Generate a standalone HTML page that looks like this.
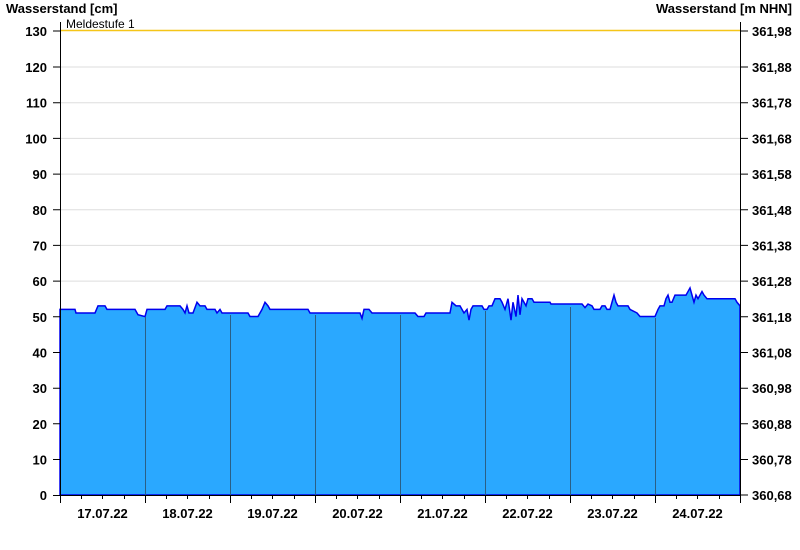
<!DOCTYPE html><html><head><style>body{margin:0;background:#fff}svg{display:block;font-family:"Liberation Sans",Arial,sans-serif}</style></head><body>
<svg width="800" height="550" viewBox="0 0 800 550">
<text x="6" y="13" font-size="13" font-weight="bold">Wasserstand [cm]</text>
<text x="792" y="13" font-size="13" font-weight="bold" text-anchor="end">Wasserstand [m NHN]</text>
<g stroke="#dddddd" stroke-width="1">
<line x1="60" x2="740" y1="459.5" y2="459.5"/><line x1="60" x2="740" y1="423.8" y2="423.8"/><line x1="60" x2="740" y1="388.2" y2="388.2"/><line x1="60" x2="740" y1="352.5" y2="352.5"/><line x1="60" x2="740" y1="316.8" y2="316.8"/><line x1="60" x2="740" y1="281.1" y2="281.1"/><line x1="60" x2="740" y1="245.4" y2="245.4"/><line x1="60" x2="740" y1="209.8" y2="209.8"/><line x1="60" x2="740" y1="174.1" y2="174.1"/><line x1="60" x2="740" y1="138.4" y2="138.4"/><line x1="60" x2="740" y1="102.7" y2="102.7"/><line x1="60" x2="740" y1="67" y2="67"/>
</g>
<line x1="60" x2="740" y1="30.5" y2="30.5" stroke="#f5c518" stroke-width="1.5"/>
<text x="66" y="28" font-size="12">Meldestufe 1</text>
<g transform="translate(0,495) scale(1,-3.5692)">
<polygon fill="#2aa8ff" stroke="#0000ee" stroke-width="1.5" vector-effect="non-scaling-stroke" points="60,0 60,52 75,52 76,51 95,51 98,53 105,53 107,52 135,52 138,50.5 145,50 147,52 165,52 167,53 180,53 183,52 185,51 187,53 189,51 193,51 197,54 200,53 205,53 207,52 215,52 217,51 220,52 222,51 248,51 250,50 258,50 262,52 265,54 268,53 270,52 308,52 310,51 360,51 362,49.5 364,52 369,52 372,51 415,51 418,50 424,50 426,51 450,51 452,54 456,53 460,53 464,51 467,52 469,49 471,52 473,53 482,53 484,52 487,52 489,53 492,53 495,55 500,55 502,54 505,52 508,55 511,49 513,54 516,50 518,56 520,50.5 522,55 524,54 526,53 528,55 532,55 534,54 550,54 551,53.5 582,53.5 585,52.5 588,53.5 592,53 594,52 600,52 602,53 605,53 607,52 610,52 612,54 614,56 616,54 618,53 628,53 630,52 637,51 640,50 655,50 658,52 660,53 664,53 666,55 668,56 670,54 672,54 675,56 686,56 688,57 690,58 692,56 694,54 696,56 698,55 700,56 702,57 704,56 707,55 735,55 737,54 740,53 740,0"/>
</g>
<g stroke="#2a5f86" stroke-width="1">
<line x1="145.5" x2="145.5" y1="317" y2="495"/><line x1="230.5" x2="230.5" y1="315" y2="495"/><line x1="315.5" x2="315.5" y1="315" y2="495"/><line x1="400.5" x2="400.5" y1="315" y2="495"/><line x1="485.5" x2="485.5" y1="311" y2="495"/><line x1="570.5" x2="570.5" y1="307" y2="495"/><line x1="655.5" x2="655.5" y1="318" y2="495"/>
</g>
<g stroke="#000" stroke-width="1">
<line x1="60.5" x2="60.5" y1="22" y2="503"/><line x1="740.5" x2="740.5" y1="22" y2="503"/><line x1="53" x2="740" y1="495.5" y2="495.5"/>
<path d="M53 31h7M53 67h7M53 102.7h7M53 138.4h7M53 174.1h7M53 209.8h7M53 245.4h7M53 281.1h7M53 316.8h7M53 352.5h7M53 388.2h7M53 423.8h7M53 459.5h7M741 31h7M741 67h7M741 102.7h7M741 138.4h7M741 174.1h7M741 209.8h7M741 245.4h7M741 281.1h7M741 316.8h7M741 352.5h7M741 388.2h7M741 423.8h7M741 459.5h7M741 495h7"/>
<path d="M145.5 495v8M230.5 495v8M315.5 495v8M400.5 495v8M485.5 495v8M570.5 495v8M655.5 495v8M60.5 495v8"/>
<path d="M81.5 495v4M102.5 495v4M124.5 495v4M166.5 495v4M187.5 495v4M209.5 495v4M251.5 495v4M272.5 495v4M294.5 495v4M336.5 495v4M357.5 495v4M379.5 495v4M421.5 495v4M442.5 495v4M464.5 495v4M506.5 495v4M527.5 495v4M549.5 495v4M591.5 495v4M612.5 495v4M634.5 495v4M676.5 495v4M697.5 495v4M719.5 495v4"/>
</g>
<g font-size="13" font-weight="bold" text-anchor="end">
<text x="47" y="36">130</text><text x="47" y="72">120</text><text x="47" y="107.7">110</text><text x="47" y="143.4">100</text><text x="47" y="179.1">90</text><text x="47" y="214.8">80</text><text x="47" y="250.4">70</text><text x="47" y="286.1">60</text><text x="47" y="321.8">50</text><text x="47" y="357.5">40</text><text x="47" y="393.2">30</text><text x="47" y="428.8">20</text><text x="47" y="464.5">10</text><text x="47" y="500">0</text>
</g>
<g font-size="13" font-weight="bold">
<text x="752" y="36">361,98</text><text x="752" y="72">361,88</text><text x="752" y="107.7">361,78</text><text x="752" y="143.4">361,68</text><text x="752" y="179.1">361,58</text><text x="752" y="214.8">361,48</text><text x="752" y="250.4">361,38</text><text x="752" y="286.1">361,28</text><text x="752" y="321.8">361,18</text><text x="752" y="357.5">361,08</text><text x="752" y="393.2">360,98</text><text x="752" y="428.8">360,88</text><text x="752" y="464.5">360,78</text><text x="752" y="500">360,68</text>
</g>
<g font-size="13" font-weight="bold" text-anchor="middle">
<text x="102.5" y="518">17.07.22</text><text x="187.5" y="518">18.07.22</text><text x="272.5" y="518">19.07.22</text><text x="357.5" y="518">20.07.22</text><text x="442.5" y="518">21.07.22</text><text x="527.5" y="518">22.07.22</text><text x="612.5" y="518">23.07.22</text><text x="697.5" y="518">24.07.22</text>
</g>
</svg>
</body></html>
